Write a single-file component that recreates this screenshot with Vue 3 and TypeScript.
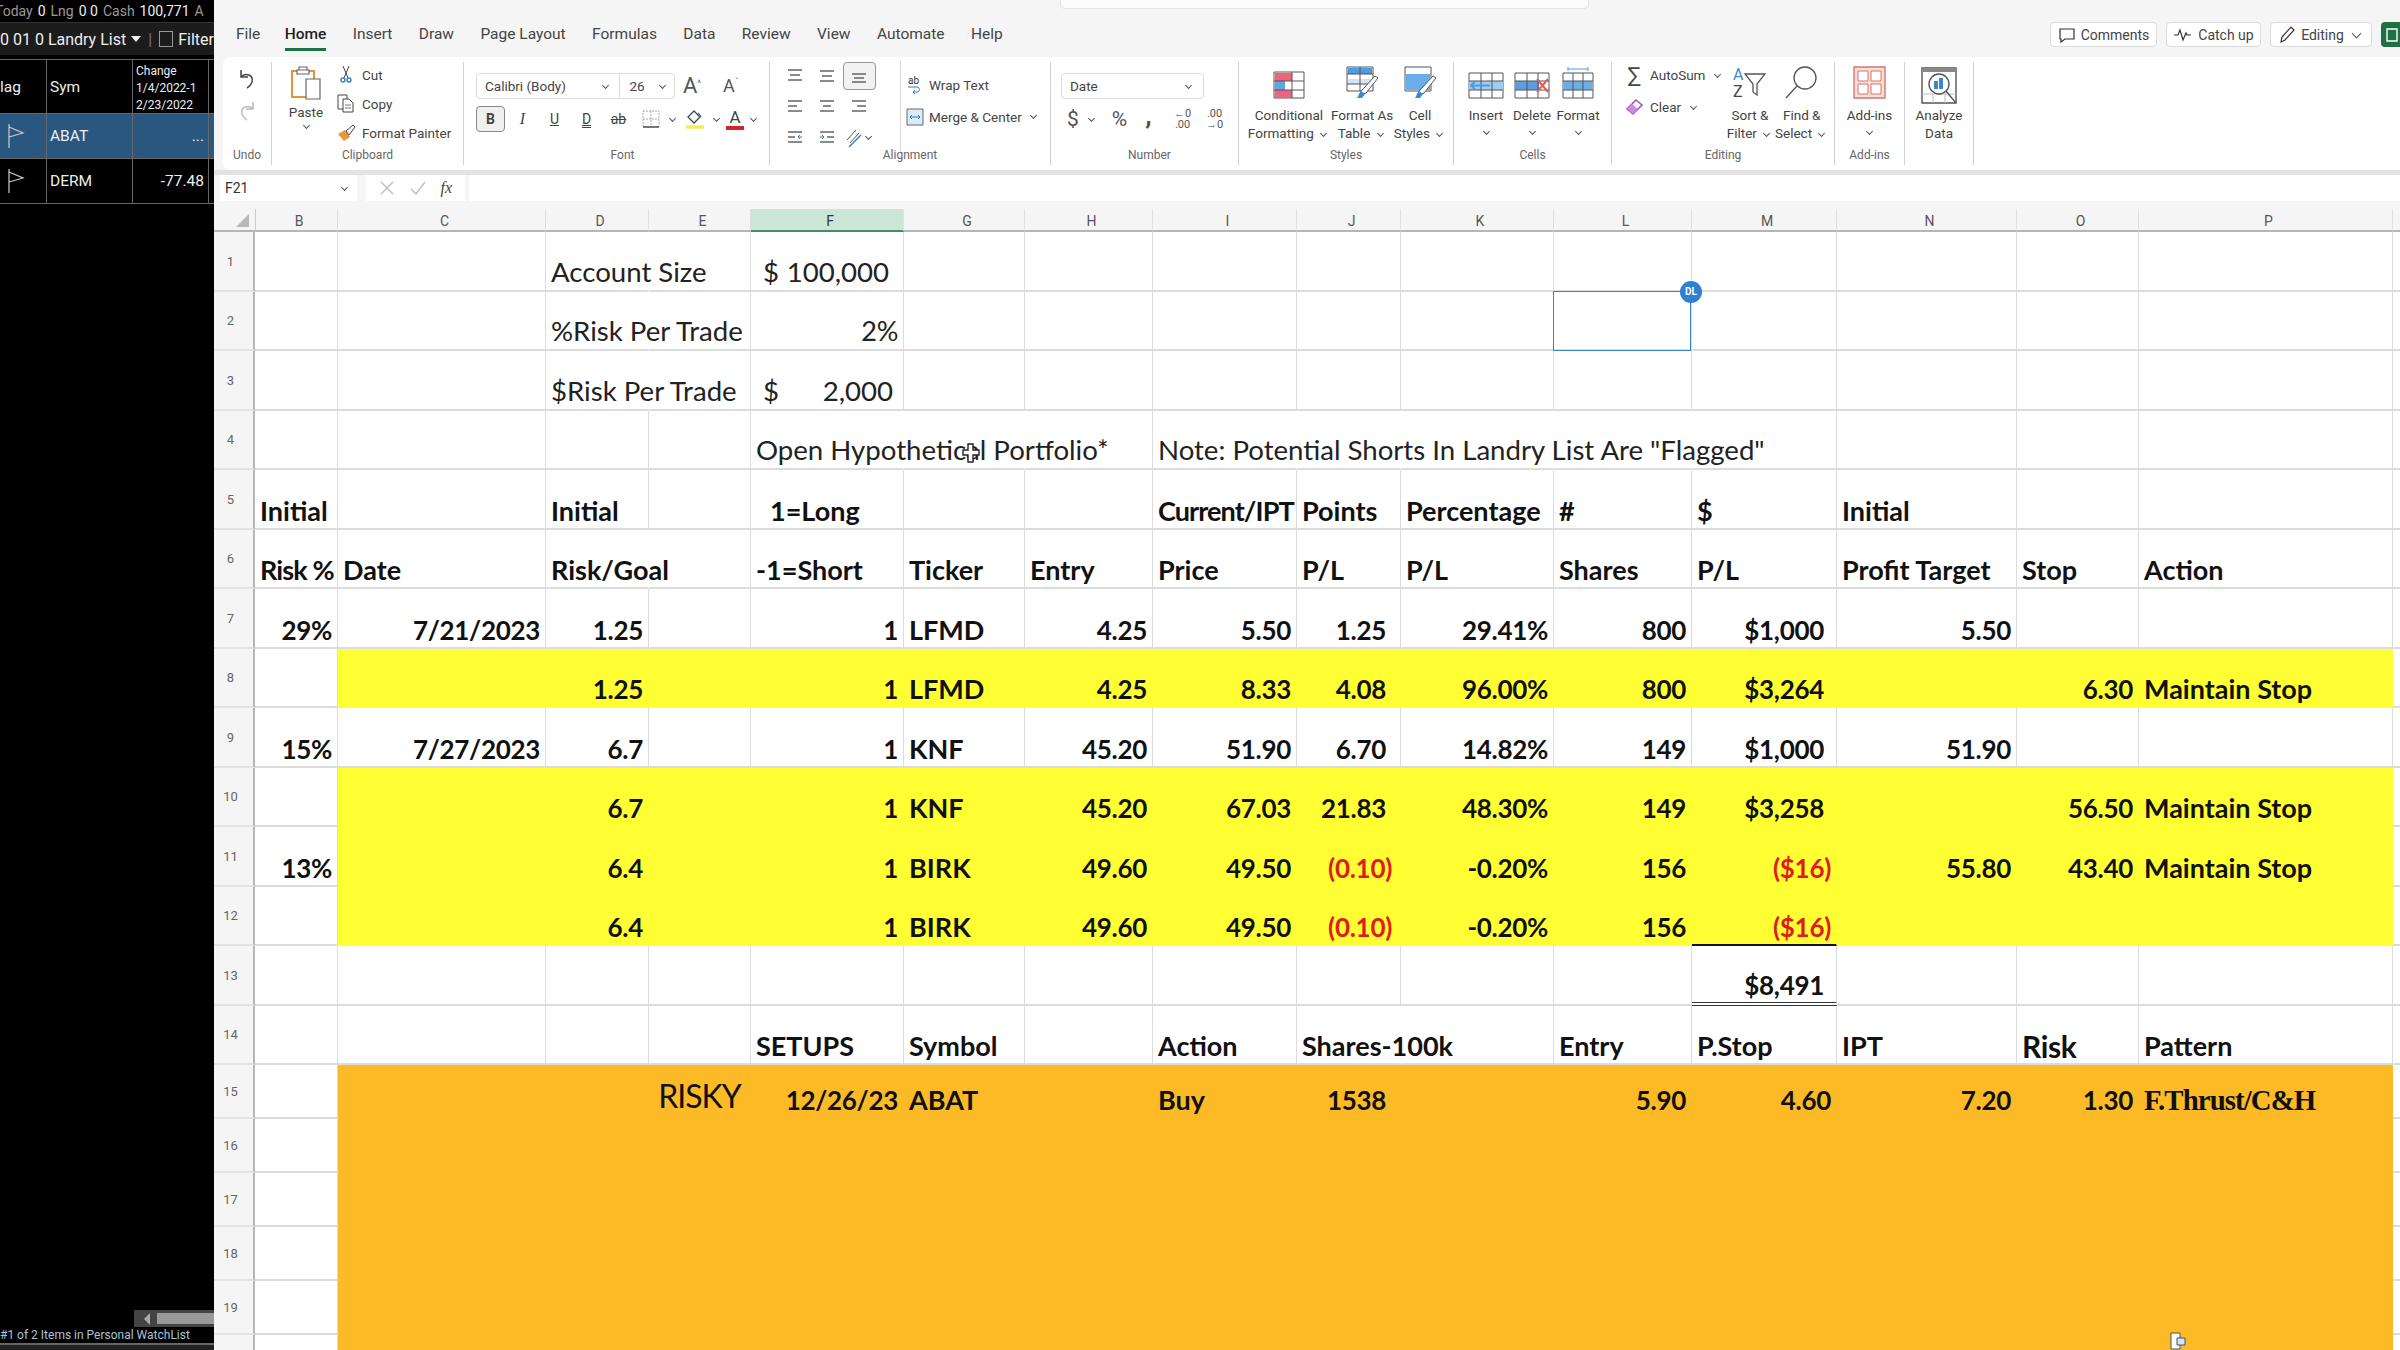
<script setup lang="ts">
type Cell = { t: string; r?: boolean; red?: boolean; cls?: string; dollar?: boolean };
type Row = {
  n: number;
  tall: boolean;
  fill?: "yellow" | "orange";
  light?: boolean;
  hide?: string[];
  cells: Record<string, Cell>;
};

const cols = ["B", "C", "D", "E", "F", "G", "H", "I", "J", "K", "L", "M", "N", "O", "P"];
const heads = [...cols];

const L = (t: string, cls = ""): Cell => ({ t, cls });
const R = (t: string, cls = ""): Cell => ({ t, r: true, cls });
const Red = (t: string, cls = ""): Cell => ({ t, r: true, red: true, cls });

// строки листа, как в файле
const rows: Row[] = [
  { n: 1, tall: true, light: true, hide: ["D"], cells: { D: L("Account Size"), F: { t: "100,000", dollar: true, cls: "pad14" } } },
  { n: 2, tall: true, light: true, hide: ["D"], cells: { D: L("%Risk Per Trade"), F: R("2%") } },
  { n: 3, tall: true, light: true, hide: ["D"], cells: { D: L("$Risk Per Trade"), F: { t: "2,000", dollar: true, cls: "pad10" } } },
  { n: 4, tall: true, light: true, hide: ["F", "G", "I", "J", "K", "L"], cells: { F: L("Open Hypothetical Portfolio*"), I: L("Note: Potential Shorts In Landry List Are \"Flagged\"") } },
  { n: 5, tall: true, cells: { B: L("Initial"), D: L("Initial"), F: L("1=Long", "indent"), I: L("Current/IPT", "tight"), J: L("Points"), K: L("Percentage"), L: L("#"), M: L("$"), N: L("Initial") } },
  { n: 6, tall: true, hide: ["D"], cells: { B: L("Risk %", "tight"), C: L("Date"), D: L("Risk/Goal"), F: L("-1=Short"), G: L("Ticker"), H: L("Entry"), I: L("Price"), J: L("P/L"), K: L("P/L"), L: L("Shares"), M: L("P/L"), N: L("Profit Target"), O: L("Stop"), P: L("Action") } },
  { n: 7, tall: true, cells: { B: R("29%"), C: R("7/21/2023"), D: R("1.25"), F: R("1"), G: L("LFMD"), H: R("4.25"), I: R("5.50"), J: R("1.25", "pad14"), K: R("29.41%"), L: R("800"), M: R("$1,000", "pad12"), N: R("5.50") } },
  { n: 8, tall: true, fill: "yellow", cells: { D: R("1.25"), F: R("1"), G: L("LFMD"), H: R("4.25"), I: R("8.33"), J: R("4.08", "pad14"), K: R("96.00%"), L: R("800"), M: R("$3,264", "pad12"), O: R("6.30"), P: L("Maintain Stop") } },
  { n: 9, tall: true, cells: { B: R("15%"), C: R("7/27/2023"), D: R("6.7"), F: R("1"), G: L("KNF"), H: R("45.20"), I: R("51.90"), J: R("6.70", "pad14"), K: R("14.82%"), L: R("149"), M: R("$1,000", "pad12"), N: R("51.90") } },
  { n: 10, tall: true, fill: "yellow", cells: { D: R("6.7"), F: R("1"), G: L("KNF"), H: R("45.20"), I: R("67.03"), J: R("21.83", "pad14"), K: R("48.30%"), L: R("149"), M: R("$3,258", "pad12"), O: R("56.50"), P: L("Maintain Stop") } },
  { n: 11, tall: true, fill: "yellow", cells: { B: R("13%"), D: R("6.4"), F: R("1"), G: L("BIRK"), H: R("49.60"), I: R("49.50"), J: Red("(0.10)", "pad8"), K: R("-0.20%"), L: R("156"), M: Red("($16)"), N: R("55.80"), O: R("43.40"), P: L("Maintain Stop") } },
  { n: 12, tall: true, fill: "yellow", cells: { D: R("6.4"), F: R("1"), G: L("BIRK"), H: R("49.60"), I: R("49.50"), J: Red("(0.10)", "pad8"), K: R("-0.20%"), L: R("156"), M: Red("($16)", "under") } },
  { n: 13, tall: true, cells: { M: R("$8,491", "pad12 total") } },
  { n: 14, tall: true, hide: ["J"], cells: { F: L("SETUPS"), G: L("Symbol"), I: L("Action"), J: L("Shares-100k"), L: L("Entry"), M: L("P.Stop"), N: L("IPT"), O: L("Risk", "bigger"), P: L("Pattern") } },
  { n: 15, tall: false, fill: "orange", cells: { E: L("RISKY", "risky"), F: R("12/26/23"), G: L("ABAT"), I: L("Buy"), J: R("1538", "pad14"), L: R("5.90"), M: R("4.60"), N: R("7.20"), O: R("1.30"), P: L("F.Thrust/C&H", "serif") } },
  { n: 16, tall: false, fill: "orange", cells: {} },
  { n: 17, tall: false, fill: "orange", cells: {} },
  { n: 18, tall: false, fill: "orange", cells: {} },
  { n: 19, tall: false, fill: "orange", cells: {} },
  { n: 20, tall: false, fill: "orange", cells: {} },
];

const isFilled = (row: Row, col: string) => !!row.fill && col !== "B";
const tabs = ["File", "Home", "Insert", "Draw", "Page Layout", "Formulas", "Data", "Review", "View", "Automate", "Help"];
</script>

<template>
  <div class="screen">
    <!-- левая панель с вотчлистом -->
    <aside class="watch">
      <div class="watch-top">
        <span class="dim cut">Today</span><span>0</span><span class="dim">Lng</span><span>0 0</span><span class="dim">Cash</span><span>100,771</span><span class="dim">A</span>
      </div>
      <div class="watch-bar">
        <span>0 01 0 Landry List</span><span class="tri"></span><span class="sep">|</span><span class="box"></span><span>Filter</span>
      </div>
      <div class="watch-row watch-head">
        <div class="wc flag-c"><span class="cut-lag">lag</span></div>
        <div class="wc sym">Sym</div>
        <div class="wc chg small">Change<br />1/4/2022-1<br />2/23/2022</div>
      </div>
      <div class="watch-row picked">
        <div class="wc flag-c">
          <svg width="20" height="28" viewBox="0 0 20 28"><path d="M3 2v24M3 5l14 6-14 4" fill="none" stroke="#ccc" stroke-width="1.2" /></svg>
        </div>
        <div class="wc sym">ABAT</div>
        <div class="wc chg num">...</div>
      </div>
      <div class="watch-row">
        <div class="wc flag-c">
          <svg width="20" height="28" viewBox="0 0 20 28"><path d="M3 2v24M3 5l14 6-14 4" fill="none" stroke="#ccc" stroke-width="1.2" /></svg>
        </div>
        <div class="wc sym">DERM</div>
        <div class="wc chg num">-77.48</div>
      </div>
      <div class="watch-space"></div>
      <div class="watch-scroll">
        <span class="scroll-arrow"></span>
        <span class="scroll-thumb"></span>
      </div>
      <div class="watch-status">#1 of 2 Items in Personal WatchList</div>
      <div class="watch-foot"></div>
    </aside>

    <main class="excel">
      <div class="searchline"></div>
      <header class="tabbar">
        <nav class="tabs">
          <span v-for="tab in tabs" :key="tab" class="tab" :class="{ active: tab === 'Home' }">{{ tab }}</span>
        </nav>
        <div class="actions">
          <button class="act act-comments">
            <svg width="18" height="18" viewBox="0 0 18 18"><path d="M2 3h14v10H7l-4 3v-3H2z" fill="none" stroke="#333" stroke-width="1.2" /></svg>
            Comments
          </button>
          <button class="act act-catch">
            <svg width="20" height="14" viewBox="0 0 20 14"><path d="M1 7h4l2-5 3 10 3-7 1 2h4" fill="none" stroke="#333" stroke-width="1.2" /></svg>
            Catch up
          </button>
          <button class="act act-edit">
            <svg width="18" height="20" viewBox="0 0 18 20"><path d="M3 17l1-5L13 2l3 3-9 10z" fill="none" stroke="#333" stroke-width="1.2" /></svg>
            Editing
            <i class="chev big-chev"></i>
          </button>
          <button class="share">
            <svg width="18" height="18" viewBox="0 0 18 18"><path d="M6 3h10v12H6z" fill="none" stroke="#fff" stroke-width="1.4" /></svg>
          </button>
        </div>
      </header>

      <section class="ribbon">
        <div class="group g-undo">
          <div class="body column center">
            <svg width="18" height="24" viewBox="0 0 18 24"><path d="M3 3v7h7M3 10c4-5 13-2 11 5-1 3-3 5-5 6" fill="none" stroke="#444" stroke-width="1.5" /></svg>
            <svg width="18" height="24" viewBox="0 0 18 24"><path d="M15 3v7H8M15 10C11 5 2 8 4 15c1 3 3 5 5 6" fill="none" stroke="#bbb" stroke-width="1.5" /></svg>
          </div>
          <div class="label">Undo</div>
        </div>

        <div class="group g-clip">
          <div class="body row-body">
            <div class="paste">
              <svg width="32" height="36" viewBox="0 0 32 36">
                <path d="M2 6h22v26H2z" fill="#fff" stroke="#e0943f" stroke-width="2" />
                <path d="M9 5h8V2h-8zM7 5h12v4H7z" fill="#fff" stroke="#666" stroke-width="1.2" />
                <path d="M16 14h14v20H16z" fill="#fff" stroke="#666" stroke-width="1.2" />
              </svg>
              <span>Paste</span>
              <i class="chev"></i>
            </div>
            <div class="clip-list">
              <div class="clip-item">
                <span class="clip-ic"><svg width="12" height="18" viewBox="0 0 12 18"><path d="M3 0l5 12M9 0L4 12" stroke="#444" stroke-width="1" fill="none" /><circle cx="3" cy="14" r="2" fill="none" stroke="#3b7fc4" stroke-width="1.4" /><circle cx="9" cy="14" r="2" fill="none" stroke="#3b7fc4" stroke-width="1.4" /></svg></span>
                Cut
              </div>
              <div class="clip-item">
                <span class="clip-ic"><svg width="18" height="19" viewBox="0 0 18 19"><path d="M1 1h9v14H1z" fill="#fff" stroke="#444" /><path d="M6 5h6l4 4v9H6z" fill="#fff" stroke="#444" /><path d="M8 11h6M8 14h6" stroke="#777" /></svg></span>
                Copy
              </div>
              <div class="clip-item">
                <span class="clip-ic"><svg width="19" height="18" viewBox="0 0 19 18"><path d="M1 10l7-4 5 7-6 4z" fill="#e8963b" /><path d="M9 7l7-6 2 2-6 8z" fill="#fff" stroke="#444" /></svg></span>
                Format Painter
              </div>
            </div>
          </div>
          <div class="label">Clipboard</div>
        </div>

        <div class="group g-font">
          <div class="body column">
            <div class="font-top">
              <div class="select font-name">
                <span class="font-name-text">Calibri (Body)</span><i class="chev"></i>
                <span class="font-size">26</span><i class="chev"></i>
              </div>
              <span class="grow-a">A<sup class="tick">^</sup></span>
              <span class="grow-a smaller">A<sup class="tick blue">ˇ</sup></span>
            </div>
            <div class="font-bottom">
              <span class="fbtn pressed"><b>B</b></span>
              <span class="fbtn"><em class="serif-i">I</em></span>
              <span class="fbtn"><u>U</u></span>
              <span class="fbtn dbl">D</span>
              <span class="fbtn"><s>ab</s></span>
              <span class="fbtn">
                <svg width="20" height="20" viewBox="0 0 20 20"><path d="M2 2h16v16H2zM10 2v16M2 10h16" fill="none" stroke="#aaa" stroke-dasharray="2 1" /><path d="M2 18h16" stroke="#555" stroke-width="1.5" /></svg>
              </span>
              <i class="chev"></i>
              <span class="fbtn">
                <svg width="22" height="22" viewBox="0 0 22 22"><path d="M10 3l6 6-6 6-6-6z" fill="none" stroke="#444" stroke-width="1.3" /><path d="M14 5l3 4" stroke="#2f7fc1" stroke-width="1.5" /><path d="M2 19h18" stroke="#f5ee53" stroke-width="3.5" /></svg>
              </span>
              <i class="chev"></i>
              <span class="fbtn a-red">A</span>
              <i class="chev"></i>
            </div>
          </div>
          <div class="label">Font</div>
        </div>

        <div class="group g-align">
          <div class="body row-body">
            <div class="align-grid">
              <svg width="20" height="18" viewBox="0 0 20 18"><path d="M3 3h14M5 8h10M3 13h14" stroke="#666" stroke-width="1.4" /></svg>
              <svg width="20" height="18" viewBox="0 0 20 18"><path d="M3 4h14M5 9h10M3 14h14" stroke="#666" stroke-width="1.4" /></svg>
              <span class="align-on"><svg width="20" height="18" viewBox="0 0 20 18"><path d="M3 7h14M5 11h10M3 15h14" stroke="#666" stroke-width="1.4" /></svg></span>
              <svg width="20" height="18" viewBox="0 0 20 18"><path d="M3 3h14M3 8h9M3 13h14" stroke="#666" stroke-width="1.4" /></svg>
              <svg width="20" height="18" viewBox="0 0 20 18"><path d="M3 3h14M6 8h8M3 13h14" stroke="#666" stroke-width="1.4" /></svg>
              <svg width="20" height="18" viewBox="0 0 20 18"><path d="M3 3h14M8 8h9M3 13h14" stroke="#666" stroke-width="1.4" /></svg>
              <svg width="20" height="18" viewBox="0 0 20 18"><path d="M3 3h14M3 8h7M3 13h14" stroke="#666" stroke-width="1.4" /><path d="M17 8h-4m2-2l-2 2 2 2" stroke="#2f7fc1" fill="none" /></svg>
              <svg width="20" height="18" viewBox="0 0 20 18"><path d="M3 3h14M10 8h7M3 13h14" stroke="#666" stroke-width="1.4" /><path d="M3 8h4m-2-2l2 2-2 2" stroke="#2f7fc1" fill="none" /></svg>
              <span class="orient">
                <svg width="18" height="22" viewBox="0 0 18 22"><path d="M3 13L12 3M6 16l9-10" stroke="#555" fill="none" /><path d="M5 20L17 8" stroke="#2f7fc1" stroke-width="1.4" /></svg>
                <i class="chev"></i>
              </span>
            </div>
            <div class="wrap-list">
              <div class="wrap-item">
                <svg width="18" height="18" viewBox="0 0 18 18"><text x="2" y="8" font-size="10" font-family="Roboto" fill="#333">ab</text><path d="M2 11h10a3 3 0 0 1 0 5H7m2-2l-2 2 2 2" stroke="#2f7fc1" fill="none" /></svg>
                Wrap Text
              </div>
              <div class="wrap-item">
                <svg width="18" height="18" viewBox="0 0 18 18"><path d="M1 1h16v16H1z" fill="#d9ecf8" stroke="#666" /><path d="M4 9h10M6 7L4 9l2 2m6-4l2 2-2 2" stroke="#2f7fc1" fill="none" /></svg>
                Merge &amp; Center <i class="chev"></i>
              </div>
            </div>
          </div>
          <div class="label">Alignment</div>
        </div>

        <div class="group g-number">
          <div class="body column">
            <div class="select number-select"><span>Date</span><i class="chev"></i></div>
            <div class="number-row">
              <span class="sym-big">$</span><i class="chev"></i>
              <span class="sym-big pct">%</span>
              <span class="sym-big comma">,</span>
              <span class="dec"><b>←0</b><b>.00</b></span>
              <span class="dec"><b>.00</b><b>→0</b></span>
            </div>
          </div>
          <div class="label">Number</div>
        </div>

        <div class="group g-styles">
          <div class="body row-body">
            <div class="big cf">
              <svg width="32" height="28" viewBox="0 0 32 28"><path d="M1 1h30v26H1z" fill="#fff" stroke="#555" /><path d="M2 2h17v8H2zM2 19h17v8H2z" fill="#f0637f" /><path d="M2 10h10v9H2z" fill="#5aa7e4" /><path d="M1 10h30M1 19h30M19 1v26" stroke="#555" /></svg>
              <span>Conditional</span><span>Formatting <i class="chev"></i></span>
            </div>
            <div class="big ft">
              <svg width="34" height="34" viewBox="0 0 34 34"><path d="M2 2h26v24H2z" fill="#fff" stroke="#555" /><path d="M3 3h24v6H3z" fill="#4d9be0" /><path d="M3 14h24v5H3z" fill="#cfe5f8" /><path d="M2 9h26M2 19h26M15 2v24" stroke="#555" /><path d="M14 30l3-5 13-14 3 2-12 15z" fill="#fff" stroke="#555" /><path d="M12 33l4-7 4 3-3 4z" fill="#3b8ad6" /></svg>
              <span>Format As</span><span>Table <i class="chev"></i></span>
            </div>
            <div class="big cs">
              <svg width="34" height="34" viewBox="0 0 34 34"><path d="M2 2h26v24H2z" fill="#fff" stroke="#555" /><path d="M3 9h24v16H3z" fill="#69aee8" /><path d="M14 30l3-5 13-14 3 2-12 15z" fill="#fff" stroke="#555" /><path d="M12 33l4-7 4 3-3 4z" fill="#3b8ad6" /></svg>
              <span>Cell</span><span>Styles <i class="chev"></i></span>
            </div>
          </div>
          <div class="label">Styles</div>
        </div>

        <div class="group g-cells">
          <div class="body row-body">
            <div class="big c-btn">
              <svg width="36" height="27" viewBox="0 0 36 27"><path d="M1 1h34v25H1z" fill="#fff" stroke="#555" /><path d="M1 9h34v9H1z" fill="#9dcdf0" /><path d="M1 9h34M1 18h34M13 1v25M24 1v25" stroke="#555" /><path d="M22 13.5H3m4-4l-4 4 4 4" stroke="#4d9be0" stroke-width="2" fill="none" /></svg>
              <span>Insert</span><i class="chev"></i>
            </div>
            <div class="big c-btn">
              <svg width="36" height="27" viewBox="0 0 36 27"><path d="M1 1h34v25H1z" fill="#fff" stroke="#555" /><path d="M1 9h24v9H1z" fill="#5c9ddb" /><path d="M1 9h34M1 18h34M13 1v25M24 1v25" stroke="#555" /><path d="M23 7l11 13M34 7L23 20" stroke="#e35b5b" stroke-width="2" /></svg>
              <span>Delete</span><i class="chev"></i>
            </div>
            <div class="big c-btn">
              <svg width="32" height="32" viewBox="0 0 32 32"><path d="M6 2h20M6 0v4M26 0v4" stroke="#4d9be0" /><path d="M1 6h30v25H1z" fill="#fff" stroke="#555" /><path d="M2 14h28v9H2z" fill="#69aee8" /><path d="M1 14h30M1 23h30M11 6v25M21 6v25" stroke="#555" /></svg>
              <span>Format</span><i class="chev"></i>
            </div>
          </div>
          <div class="label">Cells</div>
        </div>

        <div class="group g-edit">
          <div class="body row-body">
            <div class="edit-list">
              <div class="edit-item"><span class="sigma">∑</span> AutoSum <i class="chev"></i></div>
              <div class="edit-item">
                <svg width="20" height="18" viewBox="0 0 20 18"><path d="M12 2l6 5-9 9-6-5z" fill="#fff" stroke="#a14cc0" stroke-width="1.5" /><path d="M3 11l5-5 6 5-5 5z" fill="#c98ce0" /></svg>
                Clear <i class="chev"></i>
              </div>
            </div>
            <div class="big sort">
              <svg width="36" height="34" viewBox="0 0 36 34"><text x="1" y="15" font-size="16" font-family="Roboto" fill="#3f8ad0">A</text><text x="1" y="32" font-size="16" font-family="Roboto" fill="#444">Z</text><path d="M13 9h20l-8 10v11l-4-3v-8z" fill="#fff" stroke="#555" stroke-width="1.3" /></svg>
              <span>Sort &amp;</span><span>Filter <i class="chev"></i></span>
            </div>
            <div class="big find">
              <svg width="36" height="34" viewBox="0 0 36 34"><circle cx="21" cy="13" r="11" fill="#fff" stroke="#555" stroke-width="1.3" /><path d="M13 21L2 33" stroke="#555" stroke-width="1.3" /></svg>
              <span>Find &amp;</span><span>Select <i class="chev"></i></span>
            </div>
          </div>
          <div class="label">Editing</div>
        </div>

        <div class="group g-addins">
          <div class="body row-body">
            <div class="big addin">
              <svg width="33" height="33" viewBox="0 0 33 33"><path d="M1 1h31v31H1z" fill="#f6ded9" stroke="#d7766b" stroke-width="1.4" /><path d="M5 5h10v10H5zM18 5h10v10H18zM5 18h10v10H5zM18 18h10v10H18z" fill="#fff" stroke="#d7766b" /></svg>
              <span>Add-ins</span><i class="chev"></i>
            </div>
          </div>
          <div class="label">Add-ins</div>
        </div>

        <div class="group g-analyze">
          <div class="body row-body">
            <div class="big addin analyze">
              <svg width="36" height="37" viewBox="0 0 36 37"><path d="M1 1h34v35H1z" fill="#fff" stroke="#555" stroke-width="1.4" /><path d="M1 1h34v4H1z" fill="#888" /><path d="M1 27h34M12 27v9M24 27v9" stroke="#bbb" /><circle cx="18" cy="17" r="10" fill="#fff" stroke="#555" stroke-width="1.4" /><path d="M13 14h4v8h-4zM18 11h4v11h-4z" fill="#3b86cc" /><path d="M25 24l10 12" stroke="#555" stroke-width="1.4" /></svg>
              <span>Analyze</span><span>Data</span>
            </div>
          </div>
        </div>
      </section>
      <div class="ribbon-shadow"></div>

      <div class="formula">
        <div class="namebox"><span>F21</span><i class="chev"></i></div>
        <div class="fx-btns">
          <svg width="16" height="16" viewBox="0 0 16 16"><path d="M2 2l12 12M14 2L2 14" stroke="#bbb" stroke-width="1.3" /></svg>
          <svg width="18" height="16" viewBox="0 0 18 16"><path d="M2 9l5 5L16 2" stroke="#bbb" stroke-width="1.3" fill="none" /></svg>
          <em class="fx">fx</em>
        </div>
        <div class="formula-input"></div>
      </div>

      <div class="sheet">
        <!-- заголовки столбцов -->
        <div class="corner"><span class="corner-tri"></span></div>
        <div v-for="h in heads" :key="h" class="col-head" :class="{ on: h === 'F' }">{{ h }}</div>
        <div class="col-head last"></div>

        <!-- строки -->
        <template v-for="row in rows" :key="row.n">
          <div class="row-head" :class="row.tall ? 'tall' : 'short'"><span>{{ row.n }}</span></div>
          <div
            v-for="col in cols"
            :key="col"
            class="cell"
            :class="[
              row.tall ? 'tall' : 'short',
              row.light ? 'light' : 'strong',
              isFilled(row, col) ? row.fill : '',
              { nogrid: row.hide?.includes(col), right: row.cells[col]?.r, red: row.cells[col]?.red, dollar: row.cells[col]?.dollar },
              row.cells[col]?.cls,
            ]"
          >
            <span v-if="row.cells[col]?.dollar">$</span>
            <span v-if="row.cells[col]">{{ row.cells[col].t }}</span>
            <template v-if="row.n === 2 && col === 'L'">
              <div class="picked-cell"><span class="badge">DL</span></div>
            </template>
            <svg v-if="row.n === 4 && col === 'G'" class="cursor" width="18" height="20" viewBox="0 0 18 20">
              <path d="M6 1h5v6h6v5h-6v7H6v-7H1V7h5z" fill="#fff" stroke="#222" stroke-width="1.4" />
            </svg>
          </div>
          <div class="cell filler" :class="row.tall ? 'tall' : 'short'"></div>
        </template>
        <svg class="mini-doc" width="18" height="18" viewBox="0 0 18 18">
          <path d="M2 1h9v16H2z" fill="#fff" stroke="#456" /><path d="M8 6h8v7H8z" fill="#cfe5f8" stroke="#456" />
        </svg>
      </div>
    </main>
  </div>
</template>

<style>
html,
body {
  margin: 0;
  background: #fff;
}
</style>

<style scoped>
.screen {
  width: 2400px;
  height: 1350px;
  display: flex;
  overflow: hidden;
  font-family: Roboto, "Liberation Sans", sans-serif;
  color: #333;
}

/* watchlist */
.watch {
  width: 214px;
  flex: none;
  background: #000;
  color: #eee;
  display: flex;
  flex-direction: column;
  overflow: hidden;
  white-space: nowrap;
}
.watch-top {
  height: 22px;
  display: flex;
  gap: 5px;
  align-items: center;
  font-size: 14px;
  margin-left: -5px;
  border-bottom: 1px solid #333;
}
.dim {
  color: #999;
}
.watch-bar {
  height: 32px;
  background: #1c1c1c;
  display: flex;
  align-items: center;
  gap: 5px;
  font-size: 16px;
  margin-bottom: 4px;
}
.tri {
  width: 0;
  height: 0;
  border-left: 5px solid transparent;
  border-right: 5px solid transparent;
  border-top: 6px solid #eee;
}
.sep {
  color: #777;
  margin: 0 2px;
}
.box {
  width: 13px;
  height: 14px;
  border: 1px solid #999;
}
.watch-row {
  height: 45px;
  display: grid;
  grid-template-columns: 47px 86px 76px;
  border-bottom: 1px solid #666;
  font-size: 15.5px;
  box-sizing: border-box;
}
.watch-head {
  height: 55px;
  border-top: 1px solid #666;
}
.picked {
  background: #2a5780;
}
.wc {
  border-right: 1px solid #666;
  display: flex;
  align-items: center;
  padding-left: 3px;
  overflow: hidden;
}
.flag-c {
  padding-left: 6px;
}
.cut-lag {
  margin-left: -6px;
}
.small {
  font-size: 12px;
  line-height: 17px;
  display: block;
  padding-top: 3px;
}
.num {
  justify-content: flex-end;
  padding-right: 4px;
}
.watch-space {
  flex: 1;
}
.watch-scroll {
  align-self: flex-end;
  width: 80px;
  height: 17px;
  background: #444;
  display: flex;
  align-items: center;
  gap: 7px;
  padding-left: 10px;
  box-sizing: border-box;
}
.scroll-arrow {
  border-top: 6px solid transparent;
  border-bottom: 6px solid transparent;
  border-right: 6px solid #aaa;
}
.scroll-thumb {
  flex: 1;
  height: 11px;
  background: #999;
}
.watch-status {
  height: 16px;
  font-size: 12px;
  line-height: 16px;
  color: #a9c4d4;
}
.watch-foot {
  height: 5px;
  background: #222;
  border-top: 2px solid #666;
}

/* excel */
.excel {
  flex: 1;
  min-width: 0;
  background: #f5f5f5;
  display: flex;
  flex-direction: column;
  position: relative;
}
.searchline {
  position: absolute;
  left: 846px;
  top: -4px;
  width: 527px;
  height: 11px;
  background: #fbfbfb;
  border: 1px solid #e2e2e2;
  border-radius: 5px;
}
.tabbar {
  height: 57px;
  display: flex;
  align-items: flex-start;
  justify-content: space-between;
  flex: none;
}
.tabs {
  display: flex;
  gap: 26.4px;
  padding: 24px 0 0 22px;
  font-size: 15.5px;
  color: #444;
}
.tab {
  height: 24px;
  line-height: 20px;
}
.tab.active {
  color: #222;
  font-weight: 500;
  margin-left: -2px;
  border-bottom: 3px solid #1e7145;
}
.actions {
  display: flex;
  gap: 9px;
  padding-top: 22px;
}
.act {
  height: 25px;
  background: #fff;
  border: 1px solid #dcdcdc;
  border-radius: 4px;
  display: flex;
  align-items: center;
  justify-content: center;
  gap: 5px;
  font: 14px Roboto, sans-serif;
  color: #444;
  padding: 0;
}
.act-comments {
  width: 107px;
}
.act-catch {
  width: 95px;
}
.act-edit {
  width: 102px;
}
.share {
  width: 19px;
  height: 25px;
  background: #1e7145;
  border: 0;
  border-radius: 4px 0 0 4px;
  padding: 0;
  overflow: hidden;
  display: flex;
  align-items: center;
}

/* ribbon */
.ribbon {
  height: 113px;
  flex: none;
  margin-left: 9px;
  background: #fff;
  border-radius: 8px 0 0 8px;
  display: flex;
  font-size: 13.5px;
  color: #444;
}
.ribbon-shadow {
  height: 5px;
  flex: none;
  background: #e3e3e3;
}
.group {
  box-sizing: border-box;
  border-right: 1px solid #d2d2d2;
  margin: 5px 0;
  display: flex;
  flex-direction: column;
  flex: none;
}
.body {
  flex: 1;
  min-height: 0;
}
.label {
  height: 17px;
  text-align: center;
  font-size: 12px;
  line-height: 15px;
  color: #666;
}
.column {
  display: flex;
  flex-direction: column;
}
.center {
  align-items: center;
  justify-content: flex-start;
  padding-top: 5px;
  gap: 8px;
}
.row-body {
  display: flex;
}
.g-undo {
  width: 49px;
}
.g-clip {
  width: 192px;
}
.g-font {
  width: 306px;
  padding: 11px 0 0 12px;
}
.g-align {
  width: 281px;
}
.g-number {
  width: 188px;
  padding: 11px 0 0 10px;
}
.g-styles {
  width: 215px;
}
.g-cells {
  width: 158px;
}
.g-edit {
  width: 223px;
}
.g-addins {
  width: 70px;
}
.g-analyze {
  width: 69px;
}
.paste {
  width: 68px;
  display: flex;
  flex-direction: column;
  align-items: center;
  padding-top: 3px;
  gap: 3px;
}
.clip-list {
  display: flex;
  flex-direction: column;
  gap: 6px;
  padding-top: 1px;
  margin-left: -4px;
}
.clip-item {
  height: 23px;
  display: flex;
  align-items: center;
  gap: 6px;
  white-space: nowrap;
}
.clip-ic {
  width: 20px;
  display: flex;
  justify-content: center;
}
.select {
  box-sizing: border-box;
  height: 26px;
  border: 1px solid #ddd;
  border-radius: 4px;
  display: flex;
  align-items: center;
  padding: 0 8px;
}
.font-top {
  display: flex;
  align-items: center;
  gap: 8px;
}
.font-name {
  width: 199px;
  padding-right: 5px;
}
.font-name-text {
  width: 129px;
}
.font-size {
  border-left: 1px solid #ddd;
  height: 24px;
  line-height: 24px;
  width: 40px;
  margin-left: 7px;
  padding-left: 9px;
  box-sizing: border-box;
}
.grow-a {
  font-size: 22px;
  width: 32px;
  line-height: 1;
  color: #555;
}
.smaller {
  font-size: 18px;
}
.tick {
  font-size: 9px;
  color: #666;
  vertical-align: 7px;
  line-height: 0;
}
.tick.blue {
  color: #2f7fc1;
}
.font-bottom {
  display: flex;
  align-items: center;
  gap: 3px;
  margin-top: 7px;
}
.font-bottom .chev {
  margin: 0 2px 2px;
}
.fbtn {
  width: 29px;
  height: 26px;
  display: flex;
  align-items: center;
  justify-content: center;
  box-sizing: border-box;
  font-size: 14px;
  flex: none;
}
.pressed {
  background: #f0f0f0;
  border: 1px solid #888;
  border-radius: 4px;
}
.serif-i {
  font-family: "Liberation Serif", serif;
  font-size: 16px;
}
.dbl {
  text-decoration: underline double;
}
.a-red {
  font-size: 17px;
  border-bottom: 4px solid #d2232a;
  height: 22px;
  width: 18px;
  margin: 0 2px;
}
.align-grid {
  width: 121px;
  display: grid;
  grid-template-columns: repeat(3, 32px);
  grid-auto-rows: 31px;
  align-items: center;
  justify-items: center;
  padding: 0 0 0 9px;
  margin-top: -2px;
  border-right: 1px solid #ddd;
  height: 94px;
}
.align-on {
  width: 31px;
  height: 26px;
  display: flex;
  align-items: center;
  justify-content: center;
  border: 1px solid #999;
  border-radius: 4px;
  background: #f2f2f2;
}
.orient {
  display: flex;
  align-items: center;
  gap: 0;
}
.wrap-list {
  display: flex;
  flex-direction: column;
  padding: 11px 0 0 5px;
  gap: 9px;
}
.wrap-item {
  display: flex;
  align-items: center;
  gap: 5px;
  height: 23px;
  white-space: nowrap;
}
.number-select {
  width: 143px;
  justify-content: space-between;
}
.number-row {
  display: flex;
  align-items: center;
  height: 34px;
  margin-top: 3px;
  gap: 6px;
  padding-left: 6px;
}
.sym-big {
  font-size: 21px;
  line-height: 30px;
  color: #555;
}
.pct {
  margin-left: 8px;
}
.comma {
  margin: 0 12px;
  font-weight: 700;
  font-size: 26px;
  line-height: 30px;
  padding-bottom: 8px;
}
.dec {
  font-size: 11px;
  width: 26px;
  display: flex;
  flex-direction: column;
  align-items: center;
  line-height: 11px;
  color: #555;
}
.dec b {
  font-weight: 400;
}
/* большие кнопки: слот под иконку и две строки подписи */
.big {
  display: grid;
  grid-template-rows: 44px 18px 18px;
  justify-items: center;
  line-height: 18px;
  white-space: nowrap;
  flex: none;
}
.big svg {
  align-self: end;
  margin-bottom: 7px;
}
.big > .chev {
  margin-top: 5px;
}
.g-styles .body {
  padding-left: 8px;
}
.cf {
  width: 84px;
}
.ft {
  width: 62px;
}
.cs {
  width: 54px;
}
.g-cells .body {
  padding-left: 9px;
}
.c-btn {
  width: 46px;
}
.edit-list {
  width: 113px;
  padding: 1px 0 0 12px;
  box-sizing: border-box;
  display: flex;
  flex-direction: column;
  gap: 8px;
}
.edit-item {
  display: flex;
  align-items: center;
  gap: 6px;
  height: 24px;
  white-space: nowrap;
}
.sigma {
  font-size: 22px;
  width: 20px;
  text-align: center;
}
.sort,
.find {
  width: 50px;
}
.g-addins .big,
.g-analyze .big {
  width: 100%;
}
.analyze svg {
  margin-bottom: 2px;
}
.chev {
  display: inline-block;
  flex: none;
  width: 4px;
  height: 4px;
  border-right: 1px solid #555;
  border-bottom: 1px solid #555;
  transform: rotate(45deg);
  margin: 0 4px 2px;
}
.chev.big-chev {
  width: 6px;
  height: 6px;
}

/* formula bar */
.formula {
  height: 26px;
  flex: none;
  display: flex;
  gap: 9px;
  padding-left: 6px;
  margin-bottom: 8px;
  font-size: 14px;
}
.namebox {
  width: 137px;
  background: #fff;
  display: flex;
  align-items: center;
  justify-content: space-between;
  padding: 0 6px 0 5px;
  box-sizing: border-box;
}
.fx-btns {
  width: 99px;
  background: #fff;
  display: flex;
  align-items: center;
  justify-content: space-around;
  padding: 0 6px;
  box-sizing: border-box;
}
.fx {
  font-family: "Liberation Serif", serif;
  font-size: 16px;
  color: #444;
}
.formula-input {
  flex: 1;
  background: #fff;
  margin-left: -5px;
}

/* sheet */
.sheet {
  flex: 1;
  min-height: 0;
  overflow: hidden;
  position: relative;
  background: #fff;
  display: grid;
  grid-template-columns: 41px 83px 208px 103px 102px 153px 121px 128px 144px 104px 153px 138px 145px 180px 122px 254px 7px;
  grid-auto-rows: min-content;
  align-content: start;
}
.corner,
.col-head {
  height: 23px;
  box-sizing: border-box;
  background: #f5f5f5;
  border-bottom: 2px solid #b5b5b5;
}
.corner {
  position: relative;
  border-right: 1px solid #ccc;
  margin-right: -1px;
}
.corner-tri {
  position: absolute;
  right: 6px;
  bottom: 3px;
  width: 0;
  height: 0;
  border-left: 13px solid transparent;
  border-bottom: 13px solid #b8b8b8;
}
.col-head {
  font-size: 14px;
  color: #555;
  text-align: center;
  line-height: 24px;
  border-right: 1px solid #e0e0e0;
  padding-left: 6px;
}
.col-head.on {
  background: #cbe6d6;
  color: #333;
  border-bottom-color: #3f8f63;
}
.col-head.last {
  border-right: 0;
  padding: 0;
}
.row-head {
  background: #f5f5f5;
  border-right: 2px solid #b5b5b5;
  border-bottom: 2px solid #e2e2e2;
  box-sizing: border-box;
  display: flex;
  align-items: center;
  justify-content: center;
  font-size: 13px;
  color: #666;
  padding: 1px 6px 0 0;
}
.tall {
  height: 59.5px;
}
.short {
  height: 54px;
}
.cell {
  position: relative;
  box-sizing: border-box;
  border-right: 1px solid #dcdcdc;
  border-bottom: 2px solid #dcdcdc;
  display: flex;
  align-items: flex-end;
  padding: 0 5px 2px;
  white-space: nowrap;
  font-family: Lato, "Liberation Sans", sans-serif;
  font-size: 27px;
  line-height: 30px;
  color: #111;
}
.light {
  font-weight: 400;
  font-size: 27.6px;
  padding-bottom: 3px;
  color: #222;
}
.strong {
  font-weight: 700;
}
.right {
  justify-content: flex-end;
  font-size: 26px;
  letter-spacing: -0.3px;
}
.light.right {
  font-size: 27px;
}
.tight {
  letter-spacing: -0.9px;
}
.red {
  color: #e01b1b;
}
.dollar {
  justify-content: space-between;
  padding-left: 12px;
}
.nogrid {
  border-right-color: transparent;
}
.yellow {
  background: #ffff33;
  border-color: #ffff33;
}
.orange {
  background: #fcba27;
  border-color: #fcba27;
}
.filler {
  border-right: 0;
}
.indent {
  padding-left: 19px;
}
.pad14 {
  padding-right: 14px;
}
.pad12 {
  padding-right: 12px;
}
.pad10 {
  padding-right: 10px;
}
.pad8 {
  padding-right: 8px;
}
.under {
  border-bottom: 2px solid #111;
}
.total {
  border-bottom: 4px double #333;
}
.bigger {
  font-size: 30px;
  letter-spacing: -0.4px;
}
.risky {
  font-size: 32px;
  font-weight: 400;
  justify-content: center;
  padding: 0 0 3px;
  letter-spacing: -1px;
  line-height: 36px;
}
.serif {
  font-family: "Liberation Serif", serif;
  font-size: 28.8px;
  letter-spacing: -0.9px;
}
.picked-cell {
  position: absolute;
  inset: -1px 0 -2px -1px;
  border: 1.5px solid #3a85bd;
}
.badge {
  position: absolute;
  top: -11px;
  right: -12px;
  width: 22px;
  height: 22px;
  border-radius: 50%;
  background: #2f80d0;
  color: #fff;
  font: 700 10px/22px Roboto, sans-serif;
  letter-spacing: 0;
  text-align: center;
}
.cursor {
  position: absolute;
  left: 58px;
  top: 32px;
  z-index: 3;
}
.mini-doc {
  position: absolute;
  left: 1955px;
  bottom: 0;
}
</style>
